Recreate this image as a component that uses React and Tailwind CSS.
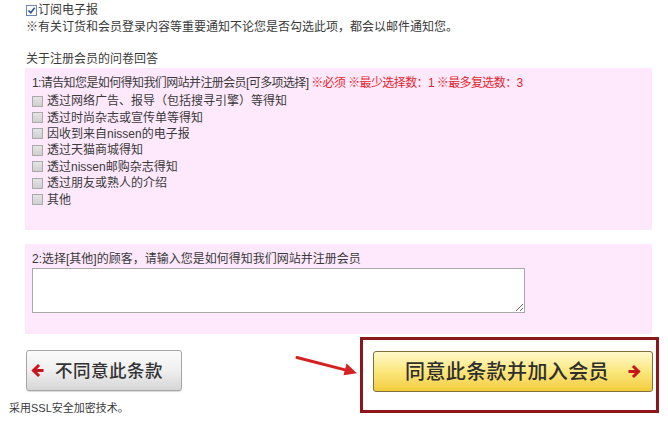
import React from 'react';

const options = [
  '透过网络广告、报导（包括搜寻引擎）等得知',
  '透过时尚杂志或宣传单等得知',
  '因收到来自nissen的电子报',
  '透过天猫商城得知',
  '透过nissen邮购杂志得知',
  '透过朋友或熟人的介绍',
  '其他',
];

const GrayBox = () => (
  <span className="inline-block w-[11px] h-[11px] border border-[#a9a9a9] bg-gradient-to-b from-[#e4e4e4] to-[#cfcfcf] shrink-0" />
);

const ArrowIcon = ({ dir }) => (
  <svg width="13" height="15" viewBox="0 0 13 15" className="shrink-0">
    {dir === 'left' ? (
      <path d="M11 7.5H3M7 3 2.5 7.5 7 12" fill="none" stroke="#c8151d" strokeWidth="3" strokeLinecap="square" />
    ) : (
      <path d="M2 7.5h8M6 3l4.5 4.5L6 12" fill="none" stroke="#c8151d" strokeWidth="3" strokeLinecap="square" />
    )}
  </svg>
);

export default function App() {
  return (
    <div className="w-[668px] h-[426px] bg-white text-[12px] leading-[16px] text-[#3a3a3a] overflow-hidden" style={{ fontFamily: '"Liberation Sans", "Noto Sans CJK SC", sans-serif' }}>
      <div className="pl-[26px] pt-[2px]">
        <div className="flex items-center h-[16px]">
          <span className="flex items-center justify-center w-[11px] h-[11px] border border-[#6d86b8] bg-white mr-[1px]">
            <svg width="9" height="9" viewBox="0 0 9 9">
              <path d="M1.5 4.5 3.7 6.8 7.7 1.8" fill="none" stroke="#2a4f9a" strokeWidth="1.6" />
            </svg>
          </span>
          <span>订阅电子报</span>
        </div>
        <div className="h-[16px] mt-[1px]">※有关订货和会员登录内容等重要通知不论您是否勾选此项，都会以邮件通知您。</div>
        <div className="h-[16px] mt-[16px]">关于注册会员的问卷回答</div>
      </div>

      <div className="ml-[25px] w-[627px] h-[162px] mt-[1px] bg-[#fde9fb] pl-[7px] pt-[7px]">
        <div className="h-[16px] tracking-[-0.6px]">
          1:请告知您是如何得知我们网站并注册会员[可多项选择] <span className="text-[#e2262e]">※必须 ※最少选择数：1 ※最多复选数：3</span>
        </div>
        <div className="mt-[2px] flex flex-col">
          {options.map((o) => (
            <label key={o} className="flex items-center h-[16.4px] gap-[4px]">
              <GrayBox />
              <span>{o}</span>
            </label>
          ))}
        </div>
      </div>

      <div className="ml-[25px] w-[627px] h-[90px] mt-[14px] bg-[#fde9fb] pl-[7px] pt-[7px]">
        <div className="h-[16px]">2:选择[其他]的顾客，请输入您是如何得知我们网站并注册会员</div>
        <textarea className="block mt-[1px] w-[493px] h-[45px] border border-[#a8a8a8] bg-white resize-y" />
      </div>

      <div className="flex mt-[3px]">
        <div className="w-[182px] pl-[10px] shrink-0">
          <div className="ml-[16px] mt-[13px] w-[156px] h-[41px] rounded-[3px] border border-[#a6a6a6] bg-gradient-to-b from-[#fbfbfb] via-[#efefef] to-[#d6d6d6] flex items-center pl-[4px] gap-[11px] shadow-[0_1px_1px_rgba(0,0,0,0.15)]">
            <ArrowIcon dir="left" />
            <span className="text-[17.5px] font-medium tracking-[0.5px] text-[#333]">不同意此条款</span>
          </div>
          <div className="mt-[9px] text-[11px] -ml-[1px]">采用SSL安全加密技术。</div>
        </div>
        <svg width="178" height="75" viewBox="0 0 178 75" className="shrink-0">
          <line x1="115" y1="20.5" x2="166" y2="33.6" stroke="#d42222" strokeWidth="3" strokeLinecap="round" />
          <path d="M175 36.2 161.5 38.3 164.6 26.5Z" fill="#d42222" />
        </svg>
        <div className="w-[299px] h-[76px] border-[3px] border-[#8c161b] pl-[10px] pt-[11px] shrink-0">
          <div className="w-[280px] h-[41px] rounded-[3px] border border-[#806f3c] bg-gradient-to-b from-[#fff9c9] via-[#fbe77c] to-[#f3cc3a] flex items-center pl-[31px] pr-[11px] justify-between">
            <span className="text-[20px] font-medium tracking-[0.4px] text-[#2e2e2e]">同意此条款并加入会员</span>
            <ArrowIcon dir="right" />
          </div>
        </div>
      </div>
    </div>
  );
}
